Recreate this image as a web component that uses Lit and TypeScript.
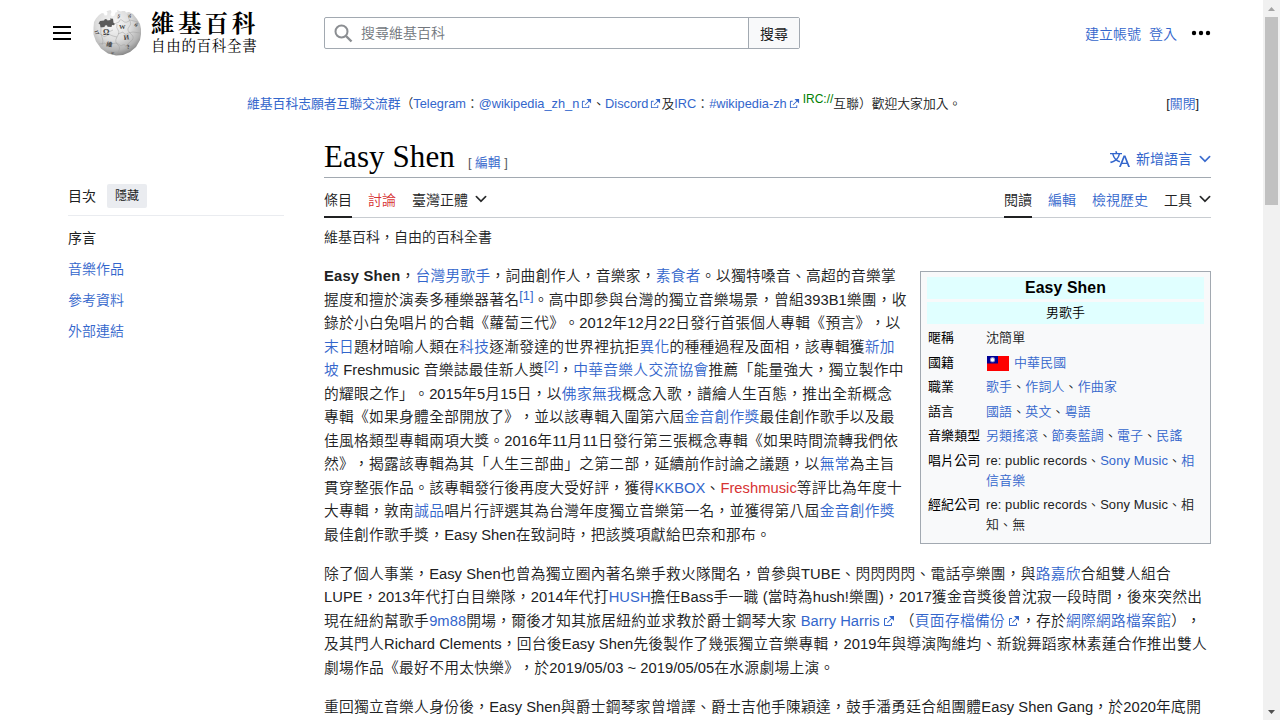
import { LitElement, html, css, svg } from "lit";
import { customElement } from "lit/decorators.js";

const CJK = /([\u2e80-\u9fff\u3000-\u303f\uf900-\ufaff\uff00-\uffef「」]+)/;
const cjkRuns = (s: string) =>
  s.split(CJK).map((part, i) => (i % 2 ? html`<span class="cj">${part}</span>` : part));

const extIcon = html`<svg class="ext" viewBox="0 0 12 12" width="12" height="12"><path fill="#36c" d="M6 1h5v5L8.86 3.85 4.7 8 4 7.3l4.15-4.16zM2 3h2v1H2v6h6V8h1v2a1 1 0 0 1-1 1H2a1 1 0 0 1-1-1V4a1 1 0 0 1 1-1"/></svg>`;

const chevron = html`<svg class="chev" viewBox="0 0 20 20" width="12" height="12"><path fill="currentColor" stroke="currentColor" stroke-width=".6" d="m17.5 4.75-7.5 7.5-7.5-7.5L1 6.25l9 9 9-9z"/></svg>`;

/* Inline markup: <link>, {missing page}, *bold*, ^reference^, ↗ external link mark */
const inline = (s: string) =>
  s.split(/(<[^>]+>|\{[^}]+\}|\*[^*]+\*|\^[^^]+\^|↗)/).map((p) => {
    const body = p.slice(1, -1);
    if (p === "↗") return extIcon;
    if (p[0] === "<") return html`<a>${cjkRuns(body)}</a>`;
    if (p[0] === "{") return html`<a class="new">${cjkRuns(body)}</a>`;
    if (p[0] === "*") return html`<b>${body}</b>`;
    if (p[0] === "^") return html`<sup><a>${body}</a></sup>`;
    return cjkRuns(p);
  });

const lines = (ls: string[]) => ls.map((l) => html`<span class="line">${inline(l)}</span>`);

const P1 = [
  "*Easy Shen*，<台灣男歌手>，詞曲創作人，音樂家，<素食者>。以獨特嗓音、高超的音樂掌",
  "握度和擅於演奏多種樂器著名^[1]^。高中即參與台灣的獨立音樂場景，曾組393B1樂團，收",
  "錄於小白兔唱片的合輯《蘿蔔三代》。2012年12月22日發行首張個人專輯《預言》，以",
  "<末日>題材暗喻人類在<科技>逐漸發達的世界裡抗拒<異化>的種種過程及面相，該專輯獲<新加>",
  "<坡> Freshmusic 音樂誌最佳新人獎^[2]^，<中華音樂人交流協會>推薦「能量強大，獨立製作中",
  "的耀眼之作」。2015年5月15日，以<佛家無我>概念入歌，譜繪人生百態，推出全新概念",
  "專輯《如果身體全部開放了》，並以該專輯入圍第六屆<金音創作獎>最佳創作歌手以及最",
  "佳風格類型專輯兩項大獎。2016年11月11日發行第三張概念專輯《如果時間流轉我們依",
  "然》，揭露該專輯為其「人生三部曲」之第二部，延續前作討論之議題，以<無常>為主旨",
  "貫穿整張作品。該專輯發行後再度大受好評，獲得<KKBOX>、{Freshmusic}等評比為年度十",
  "大專輯，敦南<誠品>唱片行評選其為台灣年度獨立音樂第一名，並獲得第八屆<金音創作獎>",
  "最佳創作歌手獎，Easy Shen在致詞時，把該獎項獻給巴奈和那布。",
];
const P2 = [
  "除了個人事業，Easy Shen也曾為獨立圈內著名樂手救火隊聞名，曾參與TUBE、閃閃閃閃、電話亭樂團，與<路嘉欣>合組雙人組合",
  "LUPE，2013年代打白目樂隊，2014年代打<HUSH>擔任Bass手一職 (當時為hush!樂團)，2017獲金音獎後曾沈寂一段時間，後來突然出",
  "現在紐約幫歌手<9m88>開場，爾後才知其旅居紐約並求教於爵士鋼琴大家 <Barry Harris>↗ （<頁面存檔備份>↗，存於<網際網路檔案館>），",
  "及其門人Richard Clements，回台後Easy Shen先後製作了幾張獨立音樂專輯，2019年與導演陶維均、新銳舞蹈家林素蓮合作推出雙人",
  "劇場作品《最好不用太快樂》，於2019/05/03 ~ 2019/05/05在水源劇場上演。",
];
const P3 = [
  "重回獨立音樂人身份後，Easy Shen與爵士鋼琴家曾增譯、爵士吉他手陳穎達，鼓手潘勇廷合組團體Easy Shen Gang，於2020年底開",
];

const flag = html`<svg class="flag" viewBox="0 0 22 15" width="22" height="15"><rect width="22" height="15" fill="#fe0000"/><rect width="11" height="7.5" fill="#000095"/><circle cx="5.5" cy="3.7" r="2.6" fill="#8c8cd0"/><circle cx="5.5" cy="3.7" r="1.7" fill="#fff"/></svg>`;

const FACTS: [string, string[], boolean?][] = [
  ["暱稱", ["沈簡單"]],
  ["國籍", ["<中華民國>"], true],
  ["職業", ["<歌手>、<作詞人>、<作曲家>"]],
  ["語言", ["<國語>、<英文>、<粵語>"]],
  ["音樂類型", ["<另類搖滾>、<節奏藍調>、<電子>、<民謠>"]],
  ["唱片公司", ["re: public records、<Sony Music>、<相>", "<信音樂>"]],
  ["經紀公司", ["re: public records、Sony Music、相", "知、無"]],
];

const glyph = (x: number, y: number, s: number, r: number, c: string) =>
  svg`<text x=${x} y=${y} font-size=${s} transform="rotate(${r} ${x} ${y})">${c}</text>`;

const globe = html`<svg class="globe" viewBox="0 0 50 46" width="50" height="46">
  <defs>
    <radialGradient id="ball" cx=".42" cy=".3" r=".72">
      <stop offset="0" stop-color="#f8f8f8"/><stop offset=".5" stop-color="#dedede"/>
      <stop offset=".82" stop-color="#b4b4b4"/><stop offset="1" stop-color="#858585"/>
    </radialGradient>
  </defs>
  <path fill="url(#ball)" d="M4 8.500 7 5 10 3l2 .5.500 2 2.500-.2.500-2.500-1-1.500 4-1.300 1 2-1 3 2 1.500 2-1 1-3 2-.5-.5-2L29 1.500l1-.5 3 0 1 1.500 3-.5 4 2 4 5 3 5 1 5v5l-1 6-4 7-6 5-7 3-7 .5-8-2-7-5-5-7-2.500-7 0-7L2 12z"/>
  <path fill="#5a5a5a" d="M8 11l4-.5 1-1.500 2 .5.500 1 3-.5-.5-1.500 3 .2.500 4 1.500 1-1 1.500-2-.2-.5 2-4-.2-.5-1.500-2 .2-.5 1.500-4 .5-.5-3-1.500-1z"/>
  <g fill="none" stroke="#a0a0a0" stroke-width=".5">
    <path d="M9 18q-1 5 1 9t0 8M3 24q4-2 7 1 2 3 4 1 3-3 7 0l4 1M25 14q-1 4 1 6t-1 7 1 8-2 10M36 4q0 4 2 7t-1 6 2 7-1 8 1 9M22 14l5-2q1-4 4-1 3 3 7-1l8 2M26 24l5-2q2 4 5 1l5-1 7 1M7 34l6-1q2 4 5 1l7-1 4 3q4-3 5 1l9-1M14 20q4 3 7 0"/>
  </g>
  <g fill="#444" font-family="Liberation Serif, 'Noto Sans CJK TC', serif" font-weight="700">
    ${glyph(11, 25, 8, 0, "Ω")}${glyph(27, 19, 6.5, 0, "W")}${glyph(32, 30, 7, -8, "И")}
    ${glyph(14, 36, 6, 10, "維")}${glyph(35, 39, 6, -10, "?")}${glyph(19, 44, 4, 10, "ש")}
    ${glyph(25, 7, 5, 20, "Ş")}${glyph(36, 7, 5, 20, "ñ")}${glyph(42, 15, 5.5, 40, "й")}${glyph(2.5, 21, 5, 70, "I7")}
  </g>
</svg>`;

@customElement("app-root")
export class AppRoot extends LitElement {
  static styles = css`
    :host { display: flex; width: 1280px; height: 720px; overflow: hidden; background: #fff; color: #202122;
      font: 350 14px/22px "Liberation Sans", "Noto Sans CJK TC", sans-serif; text-spacing-trim: space-all; white-space: nowrap; }
    * { box-sizing: border-box; }
    a { color: #36c; }
    a.new, .new { color: #d73333; }
    svg { display: block; flex: none; }
    .page { width: 1263px; height: 720px; overflow: hidden; }
    .header { display: flex; align-items: center; height: 66px; padding: 0 52px 0 53px; }
    .burger { width: 18px; height: 14px; border: solid #000; border-width: 2px 0; display: flex; align-items: center; }
    .burger::after { content: ""; height: 2px; width: 18px; background: #000; }
    .globe { margin: 0 9px 1px 21px; }
    .brand { width: 173px; color: #000; font-family: "Liberation Serif", "Noto Serif CJK TC", "Noto Sans CJK TC", serif; padding-bottom: 0; }
    .name { font-size: 23.500px; font-weight: 700; line-height: 26px; letter-spacing: 3.400px; }
    .tag { font-size: 14.500px; font-weight: 400; line-height: 18px; letter-spacing: .7px; }
    .search { display: flex; width: 476px; height: 32px; border: 1px solid #a2a9b1; border-radius: 2px; align-items: center; }
    .field { flex: 1; display: flex; align-items: center; gap: 8px; padding-left: 9px; color: #72777d; }
    .go { width: 51px; height: 30px; background: #f8f9fa; border-left: 1px solid #a2a9b1; display: grid; place-items: center; font-weight: 400; color: #202122; padding-top: 1px; }
    .user { margin-left: auto; display: flex; align-items: center; gap: 8px; color: #36c; padding-top: 2px; }
    .dots { margin: -3px 0 0 6px; color: #000; }
    .notice { display: flex; align-items: center; justify-content: space-between; height: 24px; margin: 26px 64px 0 247px; font-size: 12.800px; line-height: 24px; }
    .notice .ext { width: 11px; height: 11px; margin: 0 0 0 2px; }
    .strong { font-weight: 400; }
    .irc { color: #008000; font-size: 12px; position: relative; top: -5px; margin-left: 3px; }
    .body { display: flex; margin-top: 18px; }
    .side { width: 216px; margin: 50px 40px 0 68px; }
    .sidehead { display: flex; align-items: center; gap: 11px; height: 32px; padding-bottom: 7px; border-bottom: 1px solid #eaecf0; color: #202122; font-weight: 400; }
    .hide { background: #eaecf0; border-radius: 2px; width: 40px; height: 24px; font-size: 12px; font-weight: 400; display: grid; place-items: center; }
    .toc { display: flex; flex-direction: column; gap: 9px; padding-top: 11px; }
    .toc .cur { font-weight: 400; }
    .main { width: 887px; }
    .titlebar { display: flex; align-items: center; height: 44px; border-bottom: 1px solid #a2a9b1; }
    .title { font: 400 31px/40px "Liberation Serif", serif; color: #000; letter-spacing: .1px; margin-top: 3px; }
    .edit { font-size: 12.800px; margin: 14px 0 0 13px; color: #54595d; }
    .langs { margin-left: auto; display: flex; align-items: center; color: #36c; font-weight: 400; margin-top: 6px; }
    .langs .chev { margin-left: 7px; }
    .langicon { margin-right: 6px; }
    .tabs { display: flex; gap: 16px; height: 40px; border-bottom: 1px solid #c8ccd1; line-height: 44px; }
    .tabs span { height: 40px; display: flex; }
    .tabs .on { border-bottom: 2px solid #202122; }
    .tabs .push { margin-left: auto; }
    .tabs .chev { margin: 15px 0 0 7px; }
    .sub { margin-top: 8px; line-height: 22px; }
    .text { font-size: 14.720px; line-height: 23.550px; padding-top: 17px; letter-spacing: .04px; }
    .cj { letter-spacing: .3px; }
    .line { display: block; }
    p { margin: 0 0 15.200px; }
    b { font-weight: 700; letter-spacing: .22px; }
    sup { font-size: 12.800px; line-height: 1; vertical-align: 5px; }
    .ext { display: inline-block; vertical-align: -1px; margin: 0 1px 0 3px; }
    .info { float: right; width: 291px; height: 273px; margin-top: 6px; border: 1px solid #a2a9b1; background: #f8f9fa; padding: 5px 6px; font-size: 12.950px; line-height: 19.800px; letter-spacing: .1px; }
    .info .cj { letter-spacing: .16px; }
    .band { background: #e0ffff; height: 22px; line-height: 22px; text-align: center; margin-bottom: 3px; color: #000; }
    .band.big { font-size: 15.800px; font-weight: 700; line-height: 21px; }
    .facts { display: grid; grid-template-columns: 58px 1fr; row-gap: 4.800px; padding: 1px 0 0 1px; }
    .facts .k { font-weight: 400; color: #000; }
    .flag { display: inline-block; vertical-align: -4px; margin: 0 5px 0 1px; }
    .bar { width: 17px; height: 720px; background: #f1f1f1; display: flex; flex-direction: column; align-items: center; }
    .thumb { width: 13px; height: 188px; background: #c1c1c1; margin-bottom: auto; }
  `;

  render() {
    return html`
      <div class="page">
        <div class="header">
          <div class="burger"></div>
          ${globe}
          <div class="brand"><div class="name">維基百科</div><div class="tag">自由的百科全書</div></div>
          <div class="search">
            <div class="field">
              <svg width="19" height="19" viewBox="0 0 19 19" fill="none" stroke="#8b8e92" stroke-width="2"><circle cx="7.500" cy="7.500" r="6"/><path stroke-width="2.400" d="m12 12 5.500 5.500"/></svg>
              <span>搜尋維基百科</span>
            </div>
            <div class="go">搜尋</div>
          </div>
          <div class="user">
            <span>建立帳號</span><span>登入</span>
            <svg class="dots" width="20" height="6" viewBox="0 0 20 6" fill="currentColor"><circle cx="3" cy="3" r="2.200"/><circle cx="10" cy="3" r="2.200"/><circle cx="17" cy="3" r="2.200"/></svg>
          </div>
        </div>
        <div class="notice">
          <div><a class="strong">維基百科志願者互聯交流群</a>（<a>Telegram</a>：<a>@wikipedia_zh_n${extIcon}</a>、<a>Discord${extIcon}</a>及<a>IRC</a>：<a>#wikipedia-zh${extIcon}</a><span class="irc">IRC://</span>互聯）歡迎大家加入。</div>
          <div>[<a>關閉</a>]</div>
        </div>
        <div class="body">
          <div class="side">
            <div class="sidehead"><span>目次</span><span class="hide">隱藏</span></div>
            <div class="toc"><span class="cur">序言</span><a>音樂作品</a><a>參考資料</a><a>外部連結</a></div>
          </div>
          <div class="main">
            <div class="titlebar">
              <div class="title">Easy Shen</div>
              <div class="edit">[ <a>編輯</a> ]</div>
              <div class="langs">
                <svg class="langicon" width="20" height="20" viewBox="0 0 20 20" fill="currentColor"><path d="M20 18h-1.440a.6.6 0 0 1-.4-.12.800.800 0 0 1-.23-.31L17 15h-5l-1 2.540a.800.800 0 0 1-.22.300.600.600 0 0 1-.4.140H9l4.550-11.470h1.890zm-3.530-4.310L14.890 9.500a12 12 0 0 1-.39-1.240q-.09.370-.19.690l-.19.560-1.580 4.190zm-6.300-1.580a13.400 13.400 0 0 1-2.910-1.410 11.460 11.460 0 0 0 2.810-5.370H12V4H7.310a4 4 0 0 0-.2-.56C6.870 2.790 6.600 2 6.600 2l-1.470.500s.400.890.600 1.500H0v1.330h2.150A11.230 11.230 0 0 0 5 10.700a17.200 17.200 0 0 1-5 2.100q.560.820.870 1.380a23.300 23.300 0 0 0 5.220-2.510 15.600 15.600 0 0 0 3.560 1.770zM3.630 5.330h4.910a8.100 8.100 0 0 1-2.450 4.450 9.100 9.100 0 0 1-2.460-4.450"/></svg>
                <span>新增語言</span>${chevron}
              </div>
            </div>
            <div class="tabs">
              <span class="on">條目</span><span class="new">討論</span><span>臺灣正體${chevron}</span>
              <span class="on push">閱讀</span><span><a>編輯</a></span><span><a>檢視歷史</a></span><span>工具${chevron}</span>
            </div>
            <div class="sub">維基百科，自由的百科全書</div>
            <div class="text">
              <div class="info">
                <div class="band big">Easy Shen</div>
                <div class="band">男歌手</div>
                <div class="facts">
                  ${FACTS.map(([k, v, f]) => html`<div class="k">${cjkRuns(k)}</div><div>${f ? flag : ""}${f ? inline(v[0]) : lines(v)}</div>`)}
                </div>
              </div>
              <p>${lines(P1)}</p>
              <p>${lines(P2)}</p>
              <p>${lines(P3)}</p>
            </div>
          </div>
        </div>
      </div>
      <div class="bar">
        <svg width="17" height="17" viewBox="0 0 17 17"><path fill="#a3a3a3" d="M5 11h7L8.500 7z"/></svg>
        <div class="thumb"></div>
        <svg width="17" height="17" viewBox="0 0 17 17"><path fill="#505050" d="M5 7h7l-3.500 4z"/></svg>
      </div>
    `;
  }
}
